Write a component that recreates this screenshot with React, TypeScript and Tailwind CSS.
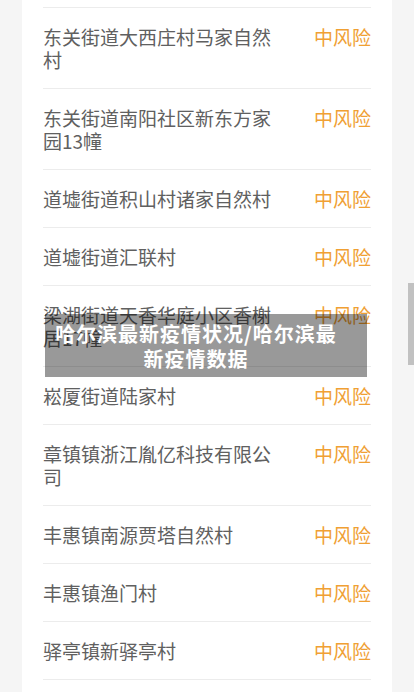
import React from "react";

const rows: string[] = [
  "东关街道大西庄村马家自然村",
  "东关街道南阳社区新东方家园13幢",
  "道墟街道积山村诸家自然村",
  "道墟街道汇联村",
  "梁湖街道天香华庭小区香榭居17幢",
  "崧厦街道陆家村",
  "章镇镇浙江胤亿科技有限公司",
  "丰惠镇南源贾塔自然村",
  "丰惠镇渔门村",
  "驿亭镇新驿亭村",
];

export default function App() {
  return (
    <div
      className="relative w-[414px] h-[692px] overflow-hidden bg-[#f5f5f5]"
      style={{ fontFamily: '"Noto Sans CJK SC", "Noto Sans", sans-serif' }}
    >
      <div className="mx-[22px] w-[370px] h-[692px] bg-white px-[21px] pt-[7px]">
        {rows.map((r, i) => (
          <div
            key={i}
            className="flex items-start justify-between border-t border-[#ececec] py-[17px]"
          >
            <div className="w-[236px] text-[19px] leading-[23px] text-[#606060]">{r}</div>
            <div className="text-[19px] leading-[23px] text-[#f0a033] whitespace-nowrap">中风险</div>
          </div>
        ))}
        <div className="border-t border-[#ececec]" />
      </div>

      <div className="absolute left-[45px] top-[314px] w-[322px] h-[63px] bg-black/40 pl-[4px] pr-[24px] flex items-center justify-center">
        <div className="text-center text-white font-bold text-[20px] leading-[25px] tracking-[1px]">
          哈尔滨最新疫情状况/哈尔滨最新疫情数据
        </div>
      </div>

      <div className="absolute left-[408px] top-[283px] w-[6px] h-[82px] bg-[#c1c1c1]" />
    </div>
  );
}
